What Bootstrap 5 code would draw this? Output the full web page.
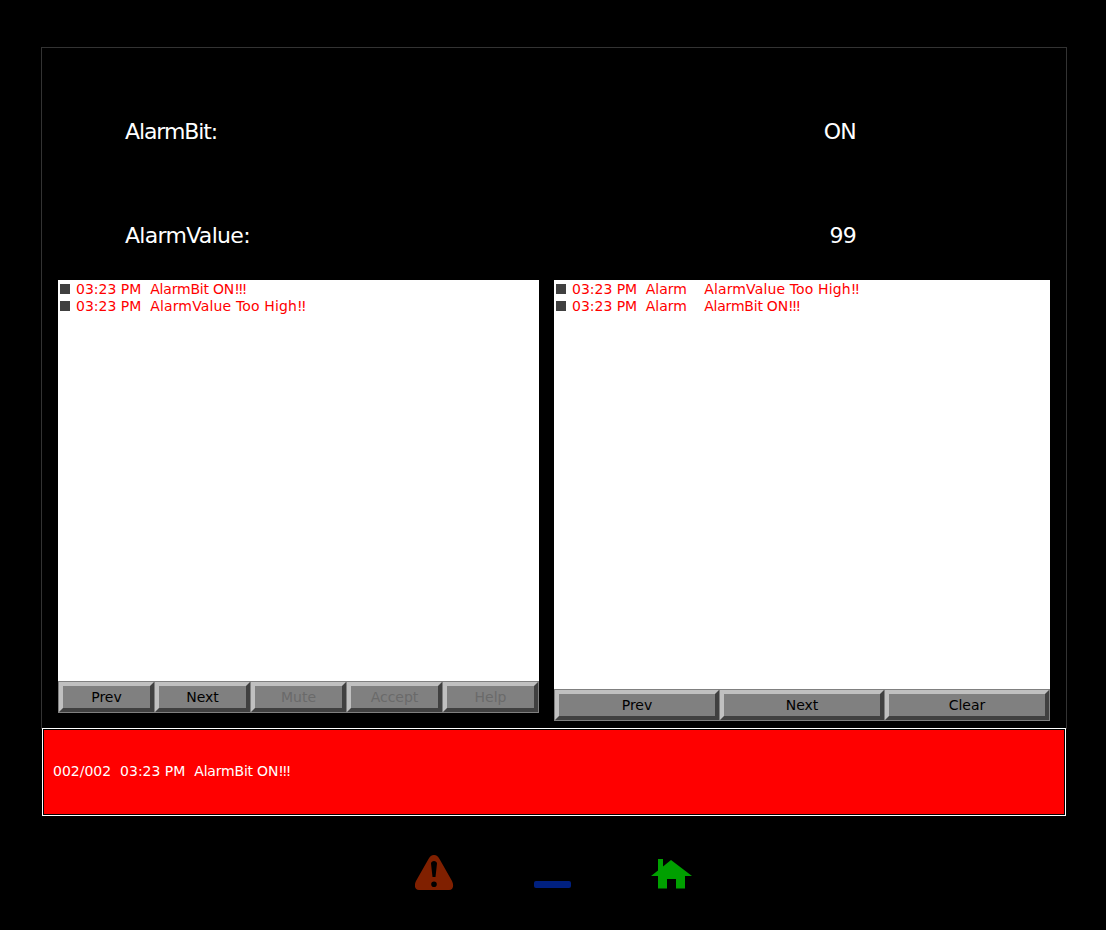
<!DOCTYPE html>
<html lang="en">
<head>
<meta charset="utf-8">
<title>Alarm</title>
<link href="https://cdn.jsdelivr.net/npm/bootstrap@5.3.0/dist/css/bootstrap.min.css" rel="stylesheet">
<style>
html, body { background: #000; height: 100%; }
body { font-family: "DejaVu Sans", sans-serif; width: 1106px; height: 930px; overflow: hidden; padding: 47px 39px 0 41px; color: #fff; }
.hmi-frame { border: 1px solid #333; height: 682px; padding-top: 65px; }
.hmi-row { height: 38px; padding-left: 83px; padding-right: 210px; font-size: 22px; line-height: 38px; margin-bottom: 66px; letter-spacing: -.7px; }
.hmi-row span:last-child { letter-spacing: -.7px; }
.hmi-tight { letter-spacing: -1.1px; }
.hmi-lists { margin-top: -41px; padding-left: 16px; padding-right: 16px; gap: 15px; }
.hmi-left { width: 481px; }
.hmi-right { width: 496px; }
.hmi-table { background: #fff; padding-top: 1px; }
.hmi-left .hmi-table { height: 401px; }
.hmi-right .hmi-table { height: 409px; }
.hmi-line { height: 17px; line-height: 17px; font-size: 14px; color: #f00; white-space: pre; padding-left: 2px; }
.hmi-right .hmi-line { word-spacing: -.15px; }
.hmi-wide { letter-spacing: .15px; }
.hmi-bang { letter-spacing: -1.8px; }
.hmi-narrow { letter-spacing: -.2px; }
.hmi-sq { width: 10px; height: 10px; background: #404040; margin-right: 6px; margin-bottom: 2px; flex: none; }
.hmi-btns { background: #808080; padding: 1px; height: 32px; gap: 1px; }
.hmi-btn { flex: 1 1 0; min-width: 0; padding: 0; height: 30px; line-height: 20px; font-size: 14px; color: #000; background: #808080; border-style: solid; border-width: 4px; border-color: #c0c0c0 #404040 #404040 #c0c0c0; border-radius: 0; }
.hmi-btn:disabled { background: #808080; color: #6a6a6a; border-color: #c0c0c0 #404040 #404040 #c0c0c0; opacity: 1; }
.hmi-banner { margin: -1px 1px 0 1px; height: 88px; border: 1px solid #fff; padding: 1px; background: #000; }
.hmi-banner-in { height: 100%; background: #f00; font-size: 14px; white-space: pre; padding-left: 9px; padding-bottom: 2px; }
.hmi-foot { padding-top: 39px; padding-left: 374px; }
.hmi-foot svg { display: block; }
.ico-warn { margin-right: 80px; }
.ico-dash { margin-right: 80px; margin-top: 26px; width: 37px; height: 7px; background: #002080; border-radius: 2px; }
.ico-home { margin-top: 4px; }
</style>
</head>
<body>
<div class="hmi-frame">
  <div class="hmi-row d-flex justify-content-between"><span class="hmi-tight">AlarmBit:</span><span>ON</span></div>
  <div class="hmi-row d-flex justify-content-between"><span>AlarmValue:</span><span>99</span></div>
  <div class="hmi-lists d-flex align-items-start">
    <div class="hmi-left">
      <div class="hmi-table">
        <div class="hmi-line d-flex align-items-center"><span class="hmi-sq"></span><span>03:23 PM  <span class="hmi-narrow">AlarmBit ON</span><span class="hmi-bang">!!!</span></span></div>
        <div class="hmi-line d-flex align-items-center"><span class="hmi-sq"></span><span>03:23 PM  <span class="hmi-wide">AlarmValue Too High</span><span class="hmi-bang">!!</span></span></div>
      </div>
      <div class="hmi-btns d-flex">
        <button class="btn hmi-btn" type="button">Prev</button>
        <button class="btn hmi-btn" type="button">Next</button>
        <button class="btn hmi-btn" type="button" disabled>Mute</button>
        <button class="btn hmi-btn" type="button" disabled>Accept</button>
        <button class="btn hmi-btn" type="button" disabled>Help</button>
      </div>
    </div>
    <div class="hmi-right">
      <div class="hmi-table">
        <div class="hmi-line d-flex align-items-center"><span class="hmi-sq"></span><span>03:23 PM  Alarm    <span class="hmi-wide">AlarmValue Too High</span><span class="hmi-bang">!!</span></span></div>
        <div class="hmi-line d-flex align-items-center"><span class="hmi-sq"></span><span>03:23 PM  Alarm    <span class="hmi-narrow">AlarmBit ON</span><span class="hmi-bang">!!!</span></span></div>
      </div>
      <div class="hmi-btns d-flex">
        <button class="btn hmi-btn" type="button">Prev</button>
        <button class="btn hmi-btn" type="button">Next</button>
        <button class="btn hmi-btn" type="button">Clear</button>
      </div>
    </div>
  </div>
</div>
<div class="hmi-banner"><div class="hmi-banner-in d-flex align-items-center"><span>002/002  03:23 PM  <span class="hmi-narrow">AlarmBit ON</span><span class="hmi-bang">!!!</span></span></div></div>
<div class="hmi-foot d-flex align-items-start">
  <svg class="ico-warn" width="39" height="36" viewBox="0 0 39 36"><path fill="#802000" fill-rule="evenodd" d="M19 0C21.500 0 23 1.500 24.500 4L37 26C39 30 38.500 35 34 35L4 35C-.5 35 -1 30 1 26L13.500 4C15 1.500 16.500 0 19 0ZM16 8.500L17.500 22L20.500 22L22 8.500C22 5 16 5 16 8.500ZM19 26.500A2.800 2.800 0 1 0 19 32.100A2.800 2.800 0 1 0 19 26.500Z"/></svg>
  <div class="ico-dash"></div>
  <svg class="ico-home" width="41" height="31" viewBox="0 0 41 31"><path fill="#00a000" fill-rule="evenodd" d="M7 0L12 0L12 7.400L20 1L41 17L34 17L34 29.500L7 29.500L7 17L0 17L7 11.400ZM16 20L16 29.500L25 29.500L25 20Z"/></svg>
</div>
</body>
</html>
